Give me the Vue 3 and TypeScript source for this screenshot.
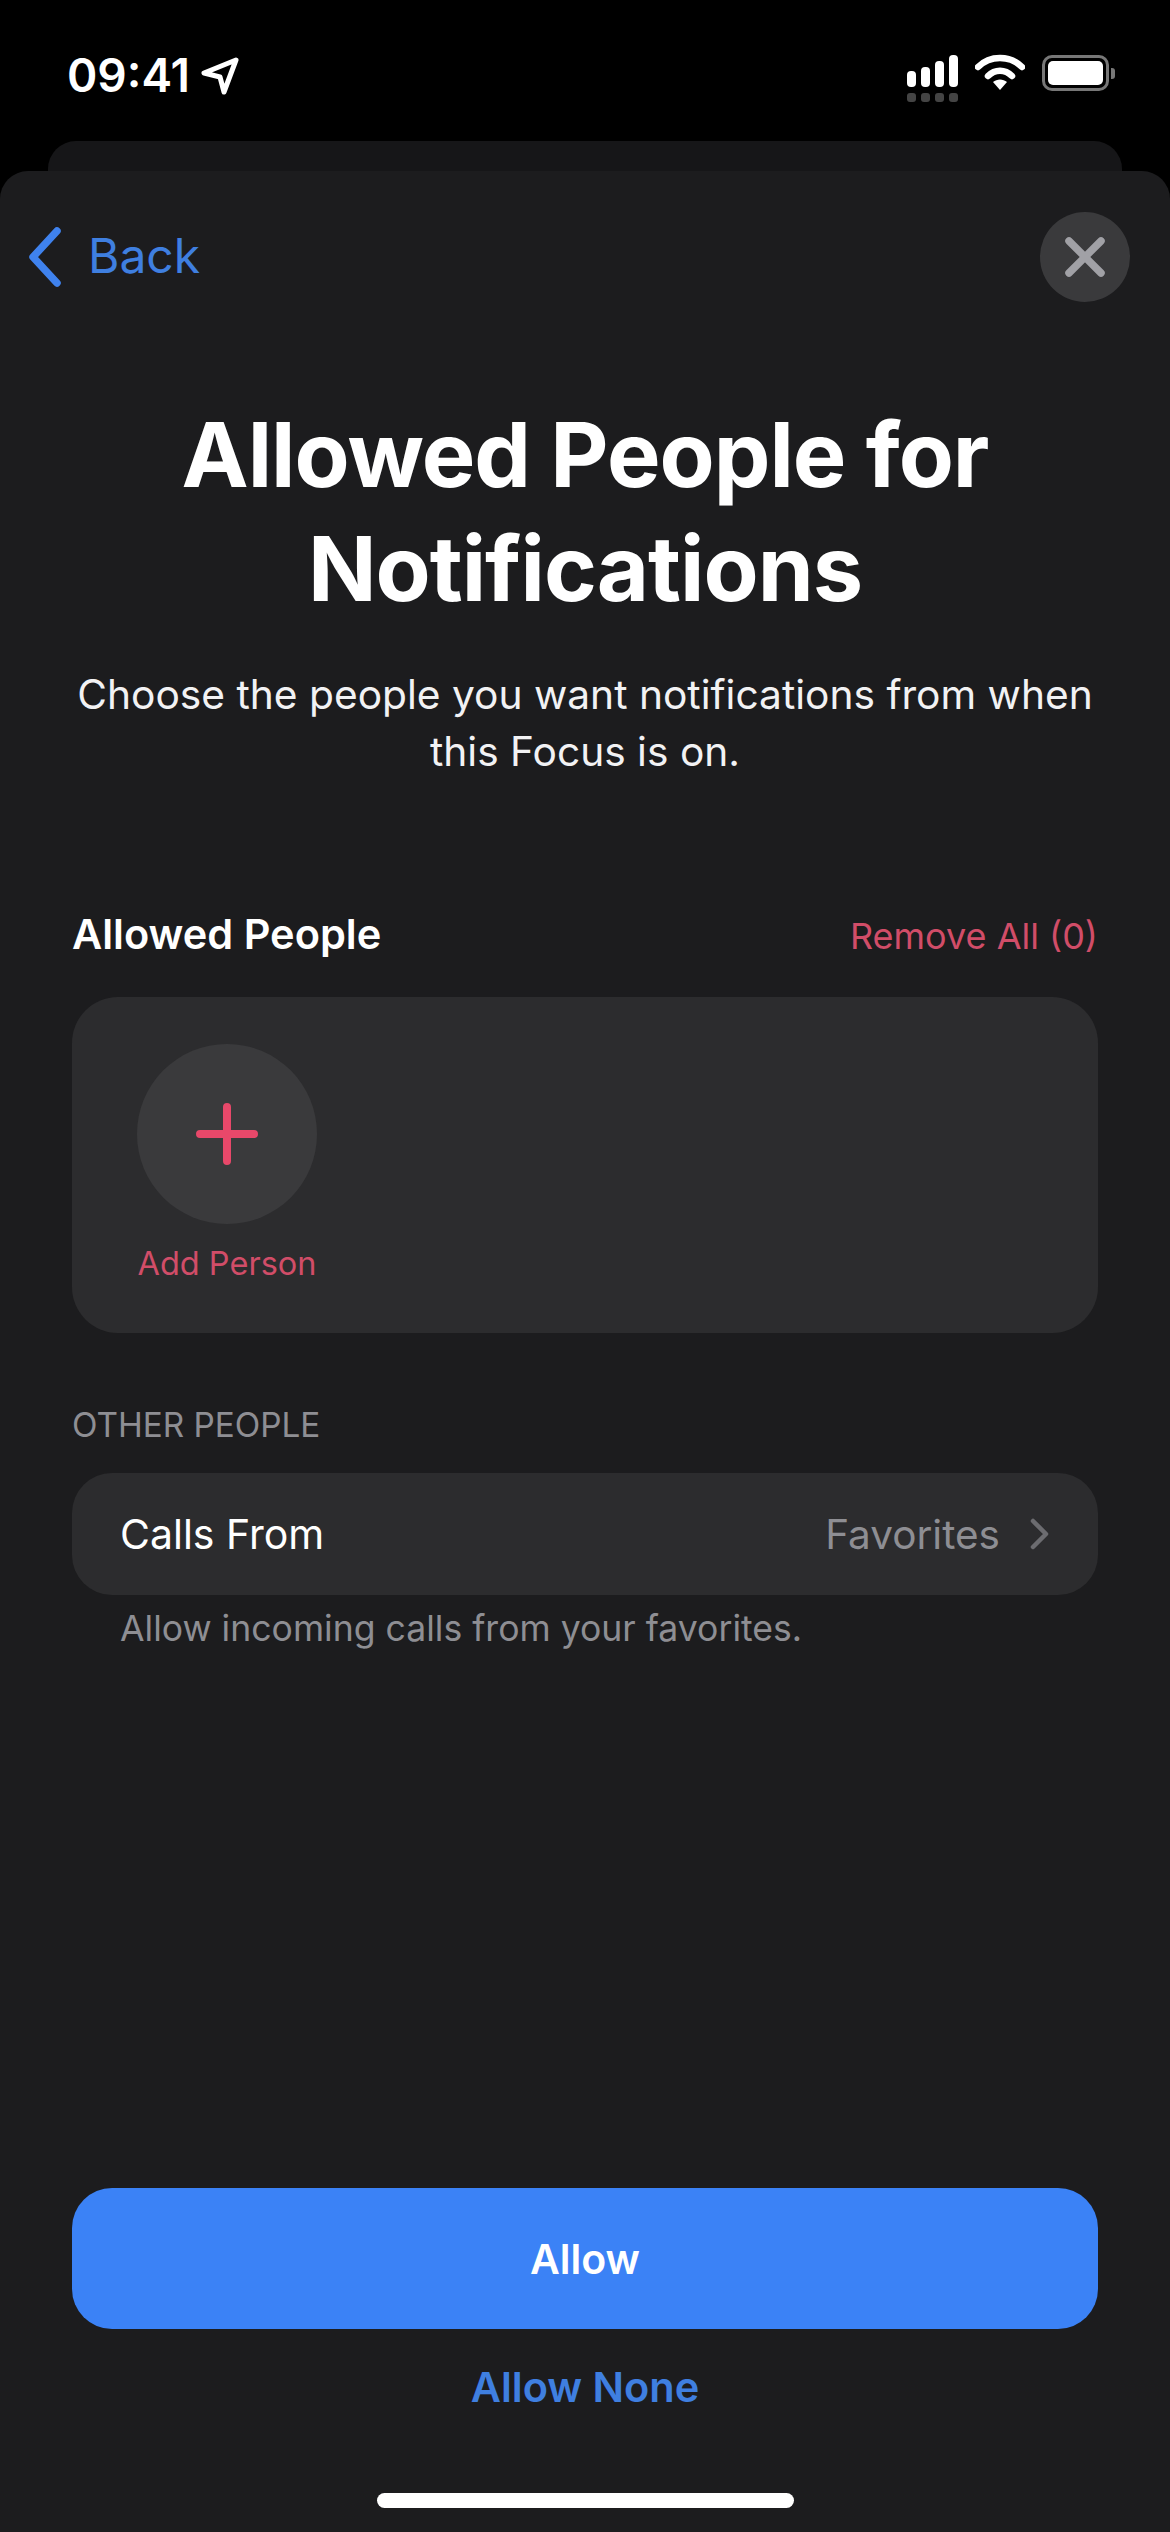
<script setup lang="ts">
const signalBars = [16, 20, 26, 32]
const title = 'Allowed People for Notifications'
</script>

<template>
  <div class="screen">
    <header class="status-bar">
      <div class="status-left">
        <span class="time">09:41</span>
        <svg class="arrow" width="38" height="38" viewBox="0 0 38 38">
          <path d="M35 3 L3 16 L19 20 L23 35 Z" fill="none" stroke="#fff" stroke-width="5" stroke-linejoin="round" />
        </svg>
      </div>
      <div class="status-right">
        <div class="signal">
          <div class="bars">
            <i v-for="h in signalBars" :key="h" :style="{ height: h + 'px' }"></i>
          </div>
          <div class="dots">
            <i v-for="h in signalBars" :key="h"></i>
          </div>
        </div>
        <svg class="wifi" width="50" height="38" viewBox="0 0 50 38">
          <path d="M3 13 C15 1 35 1 47 13" fill="none" stroke="#fff" stroke-width="6.5" stroke-linecap="round" />
          <path d="M13 22 C20 15 30 15 37 22" fill="none" stroke="#fff" stroke-width="6.5" stroke-linecap="round" />
          <path d="M18 28 C22 24.5 28 24.5 32 28 L25 36 Z" fill="#fff" />
        </svg>
        <div class="battery">
          <div class="battery-body"><div class="battery-fill"></div></div>
          <div class="battery-cap"></div>
        </div>
      </div>
    </header>

    <div class="back-card"></div>

    <main class="sheet">
      <nav class="nav">
        <div class="back">
          <svg width="36" height="60" viewBox="0 0 36 60">
            <path d="M30 4 L6 30 L30 56" fill="none" stroke="#3f82ee" stroke-width="7.5" stroke-linecap="round" stroke-linejoin="round" />
          </svg>
          <span class="back-label">Back</span>
        </div>
        <div class="close">
          <svg width="40" height="40" viewBox="0 0 40 40">
            <path d="M4 4 L36 36 M36 4 L4 36" stroke="#a1a1a6" stroke-width="7.5" stroke-linecap="round" />
          </svg>
        </div>
      </nav>

      <h1 class="title">{{ title }}</h1>
      <p class="subtitle">Choose the people you want notifications from when this Focus is on.</p>

      <section class="section">
        <div class="section-head">
          <h2>Allowed People</h2>
          <span class="remove">Remove All (0)</span>
        </div>
        <div class="people-card">
          <div class="add-person">
            <div class="add-circle">
              <svg width="62" height="62" viewBox="0 0 62 62">
                <path d="M31 4 V58 M4 31 H58" stroke="#e8486a" stroke-width="8" stroke-linecap="round" />
              </svg>
            </div>
            <span>Add Person</span>
          </div>
        </div>
      </section>

      <section class="other">
        <div class="other-label">OTHER PEOPLE</div>
        <div class="row">
          <span class="row-label">Calls From</span>
          <div class="row-value">
            <span>Favorites</span>
            <svg width="20" height="32" viewBox="0 0 20 32">
              <path d="M3 3 L16 16 L3 29" fill="none" stroke="#6c6c70" stroke-width="4.5" stroke-linecap="round" stroke-linejoin="round" />
            </svg>
          </div>
        </div>
        <p class="hint">Allow incoming calls from your favorites.</p>
      </section>

      <div class="actions">
        <button class="allow">Allow</button>
        <button class="allow-none">Allow None</button>
      </div>
      <div class="home-bar"></div>
    </main>
  </div>
</template>

<style>
html,
body {
  margin: 0;
  background: #000;
}
</style>

<style scoped>
.screen {
  width: 1170px;
  height: 2532px;
  display: flex;
  flex-direction: column;
  overflow: hidden;
  background: #000;
  font-family: Inter, "Liberation Sans", sans-serif;
  color: #fff;
}

.status-bar {
  height: 141px;
  box-sizing: border-box;
  padding: 48px 55px 0 67px;
  display: flex;
  justify-content: space-between;
  align-items: flex-start;
}

.status-left {
  display: flex;
  align-items: center;
  gap: 11px;
}

.time {
  font-size: 46px;
  line-height: 54px;
  font-weight: 600;
}

.arrow {
  margin-top: 2px;
}

.status-right {
  display: flex;
  align-items: flex-start;
  gap: 17px;
  padding-top: 7px;
}

.signal {
  width: 51px;
  display: flex;
  flex-direction: column;
  gap: 6px;
}

.bars,
.dots {
  display: flex;
  justify-content: space-between;
}

.bars {
  height: 32px;
  align-items: flex-end;
}

.bars i {
  width: 9px;
  border-radius: 4px;
  background: #fff;
}

.dots i {
  width: 9px;
  height: 9px;
  border-radius: 3px;
  background: #444;
}

.wifi {
  margin-top: -1px;
}

.battery {
  display: flex;
  align-items: center;
  gap: 2px;
}

.battery-body {
  width: 67px;
  height: 36px;
  box-sizing: border-box;
  border: 3px solid #777;
  border-radius: 10px;
  padding: 3px;
}

.battery-fill {
  height: 100%;
  border-radius: 5px;
  background: #fff;
}

.battery-cap {
  width: 4px;
  height: 11px;
  border-radius: 0 3px 3px 0;
  background: #777;
}

.back-card {
  height: 30px;
  margin: 0 48px;
  background: #161618;
  border-radius: 28px 28px 0 0;
}

.sheet {
  flex: 1;
  display: flex;
  flex-direction: column;
  background: #1c1c1e;
  border-radius: 28px 28px 0 0;
  padding: 0 72px;
  min-height: 0;
}

.nav {
  height: 90px;
  margin: 41px -32px 0 -45px;
  display: flex;
  justify-content: space-between;
  align-items: center;
}

.back {
  display: flex;
  align-items: center;
  gap: 25px;
  color: #3f7fe0;
  font-size: 48px;
  line-height: 60px;
}

.back-label {
  margin-bottom: 3px;
}

.close {
  width: 90px;
  height: 90px;
  border-radius: 50%;
  background: #3a3a3c;
  display: flex;
  align-items: center;
  justify-content: center;
}

.title {
  margin: 96px 0 0;
  font-size: 90px;
  line-height: 114px;
  font-weight: 700;
  text-align: center;
  letter-spacing: -1px;
}

.subtitle {
  margin: 40px -30px 0;
  font-size: 40.7px;
  line-height: 57px;
  text-align: center;
  color: #f2f2f4;
}

.section {
  margin-top: 129px;
}

.section-head {
  display: flex;
  justify-content: space-between;
  align-items: center;
  height: 50px;
}

.section-head h2 {
  margin: 0;
  font-size: 41.5px;
  font-weight: 600;
}

.remove {
  font-size: 36px;
  color: #d14d68;
  margin-top: 4px;
}

.people-card {
  height: 336px;
  margin-top: 38px;
  box-sizing: border-box;
  padding: 47px 65px;
  background: #2c2c2e;
  border-radius: 46px;
}

.add-person {
  width: 180px;
  display: flex;
  flex-direction: column;
  align-items: center;
  gap: 20px;
  color: #d14d68;
  font-size: 32.5px;
  line-height: 40px;
  white-space: nowrap;
}

.add-circle {
  width: 180px;
  height: 180px;
  border-radius: 50%;
  background: #3a3a3c;
  display: flex;
  align-items: center;
  justify-content: center;
}

.other {
  margin-top: 72px;
}

.other-label {
  font-size: 33.3px;
  line-height: 40px;
  color: #8e8e93;
}

.row {
  height: 122px;
  margin-top: 28px;
  box-sizing: border-box;
  padding: 0 48px;
  display: flex;
  justify-content: space-between;
  align-items: center;
  background: #2c2c2e;
  border-radius: 40px;
}

.row-label {
  font-size: 41px;
}

.row-value {
  display: flex;
  align-items: center;
  gap: 30px;
  font-size: 40.5px;
  color: #8e8e93;
}

.hint {
  margin: 12px 48px 0;
  font-size: 35.6px;
  line-height: 44px;
  color: #8e8e93;
}

.actions {
  margin-top: auto;
  display: flex;
  flex-direction: column;
  align-items: center;
}

.allow {
  width: 100%;
  height: 141px;
  border: none;
  border-radius: 40px;
  background: #3b82f6;
  color: #fff;
  font-family: inherit;
  font-size: 41px;
  font-weight: 600;
}

.allow-none {
  margin-top: 33px;
  height: 50px;
  padding: 0;
  border: none;
  background: none;
  color: #3f7fe0;
  font-family: inherit;
  font-size: 41.5px;
  font-weight: 600;
}

.home-bar {
  align-self: center;
  width: 417px;
  height: 15px;
  margin: 81px 0 24px;
  border-radius: 8px;
  background: #fff;
}
</style>
